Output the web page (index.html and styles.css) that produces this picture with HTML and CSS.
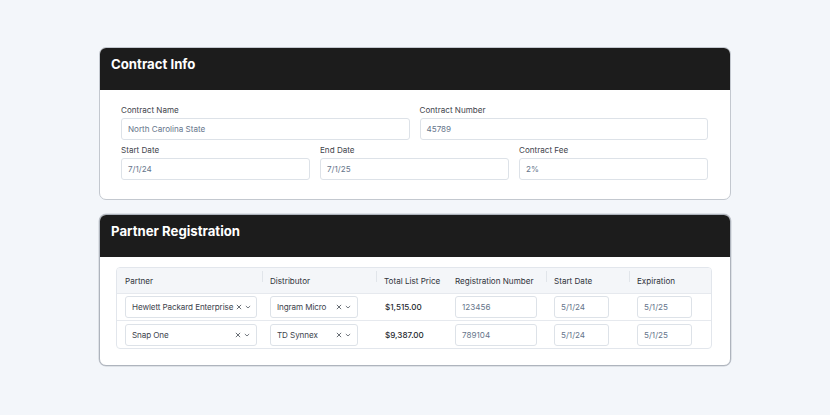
FILE: index.html
```html
<!DOCTYPE html>
<html>
<head>
<meta charset="utf-8">
<link rel="stylesheet" href="styles.css">
</head>
<body>
<div class="page">
  <section class="card card-info">
    <header class="card-head">Contract Info</header>
    <div class="card-body form">
      <div class="row two">
        <div class="field"><label>Contract Name</label><div class="input">North Carolina State</div></div>
        <div class="field"><label>Contract Number</label><div class="input">45789</div></div>
      </div>
      <div class="row three">
        <div class="field"><label>Start Date</label><div class="input">7/1/24</div></div>
        <div class="field"><label>End Date</label><div class="input">7/1/25</div></div>
        <div class="field"><label>Contract Fee</label><div class="input">2%</div></div>
      </div>
    </div>
  </section>

  <section class="card card-reg">
    <header class="card-head">Partner Registration</header>
    <div class="card-body tablewrap">
      <div class="table">
        <div class="tr th">
          <div class="cell">Partner</div>
          <div class="cell sep">Distributor</div>
          <div class="cell sep">Total List Price</div>
          <div class="cell">Registration Number</div>
          <div class="cell sep">Start Date</div>
          <div class="cell sep">Expiration</div>
        </div>
        <div class="tr">
          <div class="cell"><div class="select w-partner"><span class="sel-text">Hewlett Packard Enterprise</span><span class="sel-icons"><svg viewBox="0 0 8 8" class="ic-x"><path d="M1.5 1.5l5 5M6.5 1.5l-5 5"/></svg><svg viewBox="0 0 8 8" class="ic-chev"><path d="M1.5 3l2.5 2.3L6.5 3"/></svg></span></div></div>
          <div class="cell"><div class="select w-dist"><span class="sel-text">Ingram Micro</span><span class="sel-icons"><svg viewBox="0 0 8 8" class="ic-x"><path d="M1.5 1.5l5 5M6.5 1.5l-5 5"/></svg><svg viewBox="0 0 8 8" class="ic-chev"><path d="M1.5 3l2.5 2.3L6.5 3"/></svg></span></div></div>
          <div class="cell price">$1,515.00</div>
          <div class="cell"><div class="input w-reg">123456</div></div>
          <div class="cell"><div class="input w-date">5/1/24</div></div>
          <div class="cell"><div class="input w-date">5/1/25</div></div>
        </div>
        <div class="tr last">
          <div class="cell"><div class="select w-partner"><span class="sel-text">Snap One</span><span class="sel-icons"><svg viewBox="0 0 8 8" class="ic-x"><path d="M1.5 1.5l5 5M6.5 1.5l-5 5"/></svg><svg viewBox="0 0 8 8" class="ic-chev"><path d="M1.5 3l2.5 2.3L6.5 3"/></svg></span></div></div>
          <div class="cell"><div class="select w-dist"><span class="sel-text">TD Synnex</span><span class="sel-icons"><svg viewBox="0 0 8 8" class="ic-x"><path d="M1.5 1.5l5 5M6.5 1.5l-5 5"/></svg><svg viewBox="0 0 8 8" class="ic-chev"><path d="M1.5 3l2.5 2.3L6.5 3"/></svg></span></div></div>
          <div class="cell price">$9,387.00</div>
          <div class="cell"><div class="input w-reg">789104</div></div>
          <div class="cell"><div class="input w-date">5/1/24</div></div>
          <div class="cell"><div class="input w-date">5/1/25</div></div>
        </div>
      </div>
    </div>
  </section>
</div>
</body>
</html>
```

FILE: styles.css
```css
* { box-sizing: border-box; }
html, body { margin: 0; padding: 0; }
body {
  background: #f3f6fa;
  font-family: Inter, "Noto Sans", "Liberation Sans", sans-serif;
  color: #2b2f36;
  width: 830px;
  height: 415px;
  overflow: hidden;
}
.page {
  padding: 47px 0 0 99px;
  display: flex;
  flex-direction: column;
  gap: 14px;
}
.card {
  width: 632px;
  background: #ffffff;
  border: 1px solid #c3c8cf;
  border-radius: 7px;
  overflow: hidden;
}
.card-reg { border-color: #aeb4bd; box-shadow: 0 0 0 0.5px #c9cdd4; }
.card-head {
  background: #1c1c1c;
  color: #ffffff;
  font-weight: 700;
  font-size: 13.2px;
  height: 42px;
  padding: 8px 0 0 11px;
  line-height: 16px;
}
.form {
  padding: 14px 22px 19px 21px;
  display: flex;
  flex-direction: column;
  gap: 4px;
}
.row { display: grid; gap: 10px; }
.row.two { grid-template-columns: 1fr 1fr; }
.row.three { grid-template-columns: 1fr 1fr 1fr; }
.field { display: flex; flex-direction: column; gap: 2px; }
.field label {
  font-size: 8.1px;
  line-height: 12px;
  color: #3f444c;
}
.input {
  height: 22px;
  border: 1px solid #dde2e8;
  border-radius: 3px;
  background: #fff;
  font-size: 8.1px;
  line-height: 20px;
  padding: 0 6px;
  color: #66758b;
}
.tablewrap { padding: 10px 18px 16px 16px; }
.table {
  border: 1px solid #e2e6ec;
  border-radius: 4px;
  overflow: hidden;
}
.tr {
  display: grid;
  grid-template-columns: 145px 114px 71px 99px 83px 1fr;
  align-items: center;
  height: 27px;
  border-bottom: 1px solid #e6e9ee;
}
.tr.last { border-bottom: 0; }
.th {
  background: #f4f6f9;
  height: 26px;
  color: #30343b;
}
.cell {
  padding-left: 8px;
  position: relative;
  font-size: 8.1px;
  display: flex;
  align-items: center;
}
.th .cell.sep::before {
  content: "";
  position: absolute;
  left: 0;
  top: -5px;
  width: 1px;
  height: 11px;
  background: #e1e5ea;
}
.price { color: #24282e; padding-left: 9px; font-weight: 500; }
.select {
  height: 22px;
  border: 1px solid #dde2e8;
  border-radius: 3px;
  display: flex;
  align-items: center;
  justify-content: space-between;
  gap: 3px;
  padding: 0 6px 0 6px;
  font-size: 8.1px;
  color: #3d434c;
}
.w-partner { width: 132px; }
.w-dist { width: 88px; }
.w-reg { width: 82px; }
.w-date { width: 55px; }
.sel-text { white-space: nowrap; letter-spacing: -0.1px; }
.sel-icons { display: flex; align-items: center; gap: 3px; flex: none; }
.sel-icons svg { width: 6px; height: 6px; fill: none; stroke: #4a5059; stroke-linecap: round; }
.ic-x { stroke-width: 1.1; }
.ic-chev { stroke-width: 1; }
```
